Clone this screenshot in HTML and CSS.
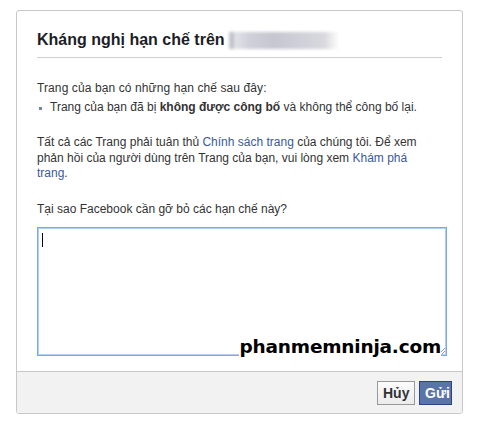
FILE: index.html
```html
<!DOCTYPE html>
<html lang="vi">
<head>
<meta charset="utf-8">
<link rel="stylesheet" href="styles.css">
</head>
<body>
<div class="dialog">
  <div class="body">
    <h2 class="title">Kháng nghị hạn chế trên <span class="blur"></span></h2>
    <p class="intro">Trang của bạn có những hạn chế sau đây:</p>
    <ul class="list">
      <li>Trang của bạn đã bị <b>không được công bố</b> và không thể công bố lại.</li>
    </ul>
    <p class="para">Tất cả các Trang phải tuân thủ <a class="link">Chính sách trang</a> của chúng tôi. Để xem phản hồi của người dùng trên Trang của bạn, vui lòng xem <a class="link">Khám phá trang</a>.</p>
    <p class="question">Tại sao Facebook cần gỡ bỏ các hạn chế này?</p>
    <div class="field">
      <div class="textarea"><span class="caret"></span><span class="grip"></span></div>
      <span class="watermark">phanmemninja.com</span>
    </div>
  </div>
  <div class="footer">
    <button class="btn btn-cancel">Hủy</button>
    <button class="btn btn-send">Gửi</button>
  </div>
</div>
</body>
</html>
```
FILE: styles.css
```css
* { box-sizing: border-box; }
html, body { margin: 0; padding: 0; background: #fff; }
body {
  font-family: "Liberation Sans", Arial, sans-serif;
  font-size: 12px;
  color: #333;
}
.dialog {
  margin: 10px 0 0 16px;
  width: 447px;
  height: 404px;
  border: 1px solid #c8c8c8;
  border-radius: 3px;
  display: flex;
  flex-direction: column;
  overflow: hidden;
}
.body {
  flex: 1;
  padding: 19px 20px 0 20px;
}
.title {
  margin: 0;
  font-size: 16px;
  line-height: 20px;
  font-weight: bold;
  color: #1c1e26;
  padding-bottom: 7px;
  border-bottom: 1px solid #cfcfcf;
  display: flex;
  align-items: center;
  gap: 4px;
}
.blur {
  display: inline-block;
  width: 110px;
  height: 17px;
  background: linear-gradient(90deg, #c9c9d0 0px, #bdbdc6 4px, #e2e2e8 6px, #d0d0da 20px, #c6c6d0 45px, #cfcfd8 70px, #d8d8de 95px, #fff 110px);
  filter: blur(1.5px);
}
.intro {
  margin: 23px 0 0 0;
  line-height: 15px;
  letter-spacing: 0.1px;
}
.list {
  margin: 4px 0 0 0;
  padding: 0 0 0 13px;
  list-style: none;
  line-height: 15px;
}
.list li { position: relative; }
.list li::before {
  content: "";
  position: absolute;
  left: -11px;
  top: 7px;
  width: 3px;
  height: 3px;
  background: #6d84b4;
}
.list b { color: #333; }
.para {
  margin: 20px 0 0 0;
  line-height: 15.5px;
  padding-right: 20px;
}
.link { color: #3b5998; text-decoration: none; }
.question {
  margin: 20px 0 0 0;
  line-height: 15px;
}
.field {
  position: relative;
  margin-top: 10px;
  width: 410px;
}
.textarea {
  position: relative;
  width: 410px;
  height: 129px;
  border: 1px solid #7aa7ee;
  box-shadow: inset 0 0 0 1px #b4cdf5;
  background: #fff;
}
.caret {
  position: absolute;
  left: 4px;
  top: 5px;
  width: 1px;
  height: 14px;
  background: #000;
}
.grip {
  position: absolute;
  right: 1px;
  bottom: 1px;
  width: 6px;
  height: 6px;
  background: linear-gradient(135deg, transparent 45%, #999 45%, #999 55%, transparent 55%, transparent 70%, #999 70%, #999 80%, transparent 80%);
}
.watermark {
  position: absolute;
  right: 6px;
  bottom: -2px;
  font-family: "DejaVu Sans", Verdana, sans-serif;
  font-weight: bold;
  font-size: 18.5px;
  line-height: 22px;
  letter-spacing: -0.2px;
  color: #000;
  background: #fff;
  padding: 0 0 0 1px;
}
.footer {
  height: 42px;
  background: #f2f2f2;
  border-top: 1px solid #c8c8c8;
  display: flex;
  justify-content: flex-end;
  align-items: flex-start;
  gap: 4px;
  padding: 9px 10px 0 0;
}
.btn {
  height: 24px;
  padding: 0 5px;
  font-family: "Liberation Sans Narrow", "Liberation Sans", Arial, sans-serif;
  font-weight: bold;
  font-size: 14px;
  line-height: 22px;
  border: 1px solid #999;
  cursor: pointer;
}
.btn-cancel {
  width: 38px;
  background: linear-gradient(#fbfbfb, #ececec);
  color: #333;
}
.btn-send {
  width: 33px;
  background: #5b74a8;
  border-color: #29447e;
  color: #fff;
}
```
